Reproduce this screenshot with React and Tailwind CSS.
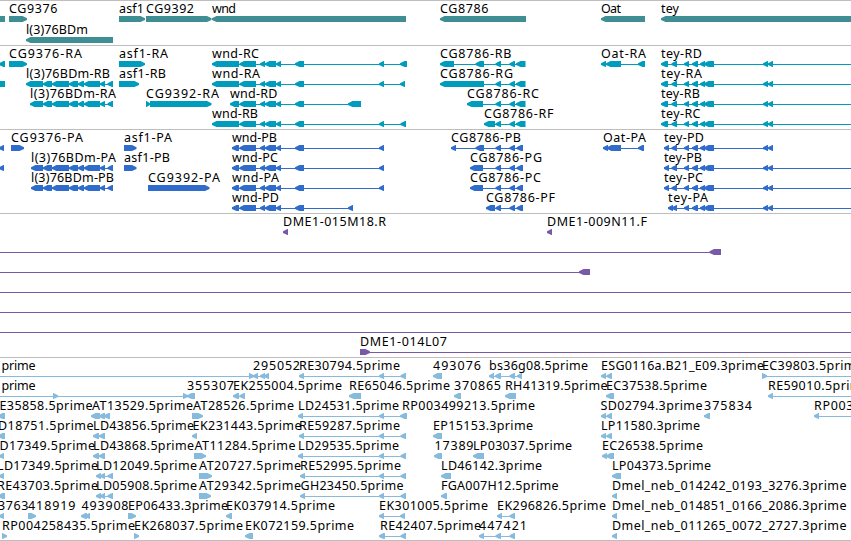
import React from 'react';

const VIEW_WIDTH = 851;
const BAR = 6;
const HEAD = 5;

// exon groups shared between isoforms: [start, end]
const L3_TAIL = [[43, 52], [52, 69], [69, 78], [78, 84], [84, 100], [100, 105], [107.5, 113]];
const WND_MID = [[239.5, 256], [260, 265], [265, 276], [276, 281], [295, 304]];
const CG8786_TAIL = [[495.5, 501], [509.5, 515]];
const TEY_MID = [[671.5, 677], [684, 689], [692, 698], [700, 705], [704, 714], [763, 768], [768, 773]];
const TEY_SHORT = TEY_MID.slice(1);
const EST_WND = [[379, 384], [400.5, 406]];

// name, x and w place the label; exons default to pointing left
const genes = [
    { row: 0, exons: [[0, 5]], dir: 'none' },
    { name: 'CG9376', x: 9, w: 48.5, row: 0, exons: [[9, 27]], dir: 'right' },
    { name: 'l(3)76BDm', x: 26, w: 62, row: 1, exons: [[26, 113]] },
    { name: 'asf1', x: 119, w: 25, row: 0, exons: [[119, 145]], dir: 'right' },
    { name: 'CG9392', x: 146, w: 48, row: 0, exons: [[146, 211.5]], dir: 'right' },
    { name: 'wnd', x: 212, w: 24, row: 0, exons: [[212, 406]] },
    { name: 'CG8786', x: 440, w: 48.5, row: 0, exons: [[440, 526]] },
    { name: 'Oat', x: 601, w: 20, row: 0, exons: [[601, 645]] },
    { name: 'tey', x: 661, w: 18, row: 0, exons: [[661, 860]] },
];

const transcripts = [
    { row: 0, exons: [[-1, 5]] },
    { name: 'CG9376-RA', x: 9, w: 73, row: 0, exons: [[9, 27]], dir: 'right' },
    { name: 'asf1-RA', x: 119, w: 49, row: 0, exons: [[119, 145]], dir: 'right' },
    { name: 'wnd-RC', x: 212, w: 47, row: 0, exons: [[212, 239], ...WND_MID, [379, 384], [400, 407]] },
    { name: 'CG8786-RB', x: 440, w: 71.5, row: 0, exons: [[440, 454], [475.5, 484], ...CG8786_TAIL, [516, 525.5]] },
    { name: 'Oat-RA', x: 601, w: 45, row: 0, exons: [[601, 606], [606, 621], [638, 645]] },
    { name: 'tey-RD', x: 661, w: 41, row: 0, exons: [[661, 668], ...TEY_MID], to: 851 },

    { row: 1, exons: [[0, 5]], dir: 'none' },
    { name: 'l(3)76BDm-RB', x: 26, w: 84, row: 1, exons: [[26, 43], ...L3_TAIL] },
    { name: 'asf1-RB', x: 119, w: 47, row: 1, exons: [[119, 139]], dir: 'right' },
    { name: 'wnd-RA', x: 212, w: 48, row: 1, exons: [[212, 239], ...WND_MID, [379, 384], [400, 405]] },
    { name: 'CG8786-RG', x: 440, w: 73, row: 1, exons: [[440, 484], ...CG8786_TAIL, [516, 525.5]] },
    { name: 'tey-RA', x: 661, w: 41, row: 1, exons: [[661, 668], ...TEY_MID], to: 851 },

    { name: 'l(3)76BDm-RA', x: 30, w: 86, row: 2, exons: [[30, 43], ...L3_TAIL] },
    { name: 'CG9392-RA', x: 146, w: 73, row: 2, exons: [[146, 150], [150, 211.5]], dir: 'right' },
    { name: 'wnd-RD', x: 230, w: 47.5, row: 2, exons: [[230, 239], ...WND_MID, [348, 361]] },
    { name: 'CG8786-RC', x: 467, w: 72, row: 2, exons: [[467, 483], ...CG8786_TAIL, [516, 525.5]] },
    { name: 'tey-RB', x: 661, w: 39, row: 2, exons: [[661, 668], ...TEY_MID], to: 851 },

    { name: 'wnd-RB', x: 212, w: 46, row: 3, exons: [[212, 239], ...WND_MID, [379, 384], [400.5, 406]] },
    { name: 'CG8786-RF', x: 484, w: 69.5, row: 3, exons: [[484, 495], ...CG8786_TAIL, [516, 525.5]] },
    { name: 'tey-RC', x: 661, w: 39.5, row: 3, exons: [[661, 668], ...TEY_MID], to: 851 },
];

const proteins = [
    { row: 0, exons: [[-1, 4]] },
    { name: 'CG9376-PA', x: 11, w: 72, row: 0, exons: [[11, 24]], dir: 'right' },
    { name: 'asf1-PA', x: 124, w: 48, row: 0, exons: [[124, 136.5]], dir: 'right' },
    { name: 'wnd-PB', x: 232, w: 45, row: 0, exons: [[232, 239], ...WND_MID, [379, 384]] },
    { name: 'CG8786-PB', x: 451, w: 70, row: 0, exons: [[451, 456], [475.5, 484], ...CG8786_TAIL, [516.5, 523]] },
    { name: 'Oat-PA', x: 603, w: 43, row: 0, exons: [[603, 608], [607, 621], [638, 644]] },
    { name: 'tey-PD', x: 664, w: 40, row: 0, exons: [[664, 669], ...TEY_MID] },

    { row: 1, exons: [[-1, 4]] },
    { name: 'l(3)76BDm-PA', x: 31, w: 85, row: 1, exons: [[31, 43], ...L3_TAIL] },
    { name: 'asf1-PB', x: 124, w: 46, row: 1, exons: [[124, 136.5]], dir: 'right' },
    { name: 'wnd-PC', x: 232, w: 46, row: 1, exons: [[232, 239], ...WND_MID, [379, 384]] },
    { name: 'CG8786-PG', x: 470, w: 72, row: 1, exons: [[470, 483], ...CG8786_TAIL, [516.5, 523]] },
    { name: 'tey-PB', x: 664, w: 38, row: 1, exons: [[664, 669], ...TEY_MID], to: 851 },

    { name: 'l(3)76BDm-PB', x: 31, w: 83, row: 2, exons: [[31, 43], ...L3_TAIL] },
    { name: 'CG9392-PA', x: 148, w: 72, row: 2, exons: [[148, 209.5]], dir: 'right' },
    { name: 'wnd-PA', x: 232, w: 47, row: 2, exons: [[232, 239], ...WND_MID, [379, 384]] },
    { name: 'CG8786-PC', x: 470, w: 71, row: 2, exons: [[470, 483], ...CG8786_TAIL, [516.5, 523]] },
    { name: 'tey-PC', x: 664, w: 39, row: 2, exons: [[664, 669], ...TEY_MID], to: 851 },

    { name: 'wnd-PD', x: 232, w: 47, row: 3, exons: [[232, 239], ...WND_MID, [348, 353]] },
    { name: 'CG8786-PF', x: 486, w: 69, row: 3, exons: [[486, 495], ...CG8786_TAIL, [516.5, 523]] },
    { name: 'tey-PA', x: 668, w: 40, row: 3, exons: [[668, 673], [672, 677], ...TEY_SHORT], to: 851 },
];

const bacs = [
    { name: 'DME1-015M18.R', x: 283, w: 103, row: 0, exons: [[283, 288]] },
    { name: 'DME1-009N11.F', x: 547, w: 100, row: 0, exons: [[547, 552]] },
    { row: 1, exons: [[709.5, 721]], from: 0 },
    { row: 2, exons: [[579, 590]], from: 0 },
    { row: 3, exons: [], from: 0, to: 851 },
    { row: 4, exons: [], from: 0, to: 851 },
    { row: 5, exons: [], from: 0, to: 851 },
    { name: 'DME1-014L07', x: 360, w: 87, row: 6, exons: [[360, 370]], dir: 'right', to: 851 },
];

const ests = [
    { name: 'prime', x: 1.5, w: 34, row: 0, exons: [[249, 254]], dir: 'right', from: 0 },
    { name: '295052', x: 253, w: 47, row: 0, exons: [[253, 258], [260, 265], [264, 269]] },
    { name: 'RE30794.5prime', x: 299, w: 101, row: 0, exons: [[299, 304], ...EST_WND] },
    { name: '493076', x: 433, w: 48, row: 0, exons: [[433, 442]] },
    { name: 'bs36g08.5prime', x: 489, w: 99, row: 0, exons: [[489, 494], [495, 501], [509.5, 515], [517, 522]] },
    { name: 'ESG0116a.B21_E09.3prime', x: 601, w: 163, row: 0, exons: [[601, 606], [606.5, 612]] },
    { name: 'EC39803.5prime', x: 762, w: 101, row: 0, exons: [[762, 767]], dir: 'right', to: 851 },

    { name: 'prime', x: 1.5, w: 34, row: 1, exons: [[53, 58], [183, 188]], dir: 'right', from: 0 },
    { name: '355307', x: 187, w: 47, row: 1, exons: [[187, 195]] },
    { name: 'EK255004.5prime', x: 233, w: 109, row: 1, exons: [[233, 239], [239.5, 245]] },
    { name: 'RE65046.5prime', x: 349, w: 101, row: 1, exons: [[349, 361]] },
    { name: '370865', x: 454, w: 47, row: 1, exons: [[454, 461]] },
    { name: 'RH41319.5prime', x: 505, w: 102.5, row: 1, exons: [[505, 516]] },
    { name: 'EC37538.5prime', x: 606, w: 101, row: 1, exons: [[606, 614]] },
    { name: 'RE59010.5prime', x: 768, w: 101, row: 1, exons: [[768, 773]], to: 851 },

    { name: 'E35858.5prime', x: -0.5, w: 93, row: 2, exons: [[-2, 5]] },
    { name: 'AT13529.5prime', x: 92, w: 101, row: 2, exons: [[91, 100], [99, 105], [104, 110]] },
    { name: 'AT28526.5prime', x: 193, w: 101, row: 2, exons: [[192, 203]], dir: 'right' },
    { name: 'LD24531.5prime', x: 298, w: 101, row: 2, exons: [[298, 303], [379, 384], [400, 407]] },
    { name: 'RP003499213.5prime', x: 402, w: 133, row: 2, exons: [] },
    { name: 'SD02794.3prime', x: 600.5, w: 102, row: 2, exons: [[601, 606], [606.5, 612]] },
    { name: '375834', x: 704, w: 48, row: 2, exons: [[704, 710]] },
    { name: 'RP003', x: 814, w: 39.5, row: 2, exons: [[814, 819]], to: 851 },

    { name: 'D18751.5prime', x: -2, w: 95.5, row: 3, exons: [[-2, 5]] },
    { name: 'LD43856.5prime', x: 93, w: 101, row: 3, exons: [[93, 99], [99, 105]] },
    { name: 'EK231443.5prime', x: 192.5, w: 109, row: 3, exons: [[192, 197]] },
    { name: 'RE59287.5prime', x: 299, w: 101, row: 3, exons: [[299, 304], ...EST_WND] },
    { name: 'EP15153.3prime', x: 433, w: 100, row: 3, exons: [[433, 442]] },
    { name: 'LP11580.3prime', x: 601, w: 99, row: 3, exons: [[601, 606], [606.5, 612]] },

    { name: 'D17349.5prime', x: -0.5, w: 95.5, row: 4, exons: [[-1, 4]] },
    { name: 'LD43868.5prime', x: 93, w: 101, row: 4, exons: [[93, 99], [99, 105]] },
    { name: 'AT11284.5prime', x: 194.5, w: 101, row: 4, exons: [[194, 206]], dir: 'right' },
    { name: 'LD29535.5prime', x: 298, w: 101, row: 4, exons: [[298, 303], ...EST_WND] },
    { name: '17389', x: 434.5, w: 39, row: 4, exons: [[434, 442]] },
    { name: 'LP03037.5prime', x: 473, w: 99, row: 4, exons: [[473, 484]] },
    { name: 'EC26538.5prime', x: 602, w: 101, row: 4, exons: [[602, 607], [606, 614]] },

    { name: 'LD17349.5prime', x: -3, w: 101, row: 5, exons: [[-1, 4]] },
    { name: 'LD12049.5prime', x: 96, w: 101, row: 5, exons: [[96, 101], [100, 105], [107.5, 113]] },
    { name: 'AT20727.5prime', x: 199, w: 102, row: 5, exons: [[199, 212]], dir: 'right' },
    { name: 'RE52995.5prime', x: 300, w: 101, row: 5, exons: [[300, 305], ...EST_WND] },
    { name: 'LD46142.3prime', x: 441, w: 101, row: 5, exons: [[441, 451]] },
    { name: 'LP04373.5prime', x: 612, w: 99, row: 5, exons: [[612, 621]] },

    { name: 'RE43703.5prime', x: -3, w: 101, row: 6, exons: [[-2, 5]] },
    { name: 'LD05908.5prime', x: 96, w: 101, row: 6, exons: [[96, 101], [100, 105], [107.5, 113]] },
    { name: 'AT29342.5prime', x: 199, w: 102, row: 6, exons: [[199, 211]], dir: 'right' },
    { name: 'GH23450.5prime', x: 300.5, w: 103, row: 6, exons: [[300, 305], ...EST_WND] },
    { name: 'FGA007H12.5prime', x: 441, w: 117.5, row: 6, exons: [[441, 447]] },
    { name: 'Dmel_neb_014242_0193_3276.3prime', x: 612, w: 234.5, row: 6, exons: [[612, 617]] },

    { name: '3763', x: -2, w: 30.5, row: 7, exons: [[-1, 4]] },
    { name: '418919', x: 28, w: 47.5, row: 7, exons: [[28, 36]], dir: 'right' },
    { name: '493908', x: 81.5, w: 47, row: 7, exons: [[81, 87], [85, 90]] },
    { name: 'EP06433.3prime', x: 128, w: 100, row: 7, exons: [[128, 136]], dir: 'right' },
    { name: 'EK037914.5prime', x: 226, w: 109, row: 7, exons: [[226, 232]] },
    { name: 'EK301005.5prime', x: 379, w: 109, row: 7, exons: [[379, 384], [400, 405]] },
    { name: 'EK296826.5prime', x: 497, w: 109, row: 7, exons: [[497, 502], [509.5, 515]] },
    { name: 'Dmel_neb_014851_0166_2086.3prime', x: 612, w: 234.5, row: 7, exons: [[612, 617]] },

    { name: 'RP004258435.5prime', x: 2, w: 133, row: 8, exons: [[2, 7]], dir: 'right' },
    { name: 'EK268037.5prime', x: 134, w: 109, row: 8, exons: [[134, 139]], dir: 'right' },
    { name: 'EK072159.5prime', x: 245, w: 109, row: 8, exons: [[245, 253]] },
    { name: 'RE42407.5prime', x: 380, w: 101, row: 8, exons: [[380, 385], ...EST_WND] },
    { name: '447421', x: 479, w: 48, row: 8, exons: [[479, 484], [495.5, 501], [509.5, 515]] },
    { name: 'Dmel_neb_011265_0072_2727.3prime', x: 612, w: 234.5, row: 8, exons: [[612, 617]] },
];

// slightly blunt tip, so that short exons keep their weight at this size
const exonPoints = ([start, end], y, dir) => {
    const head = Math.min(HEAD, end - start) - 0.5;
    const tipTop = y + 2.2;
    const tipBottom = y + 4;
    const bottom = y + BAR;
    if (dir === 'none') {
        return `${start},${y} ${end},${y} ${end},${bottom} ${start},${bottom}`;
    }
    if (dir === 'right') {
        return `${start},${y} ${end - head},${y} ${end},${tipTop} ${end},${tipBottom} ${end - head},${bottom} ${start},${bottom}`;
    }
    return `${start},${tipTop} ${start + head},${y} ${end},${y} ${end},${bottom} ${start + head},${bottom} ${start},${tipBottom}`;
};

const Feature = ({ feature, pitch }) => {
    const { name, x, w, row, exons, dir = 'left' } = feature;
    const top = row * pitch;
    const barY = top + 15;
    const from = feature.from ?? (exons.length ? exons[0][0] + 2 : null);
    const to = feature.to ?? (exons.length ? exons[exons.length - 1][1] - 1 : null);
    const hasLine = from !== null && (exons.length !== 1 || feature.from !== undefined || feature.to !== undefined);

    return (
        <g>
            {hasLine && <rect x={from} y={barY + 3} width={to - from} height="1" />}
            {exons.map((exon) => (
                <polygon key={exon[0]} points={exonPoints(exon, barY, dir)} />
            ))}
            {name && (
                <text x={x} y={top + 12} textLength={w} className="fill-black">
                    {name}
                </text>
            )}
        </g>
    );
};

const Track = ({ features, pitch = 20, className }) => (
    <section className={`w-full shrink-0 overflow-hidden border-t border-[#bebebe] ${className}`}>
        <svg
            width={VIEW_WIDTH}
            height="100%"
            className="block fill-current font-['Noto_Sans',sans-serif] text-[12.5px]"
        >
            {features.map((feature, i) => (
                <Feature key={i} feature={feature} pitch={pitch} />
            ))}
        </svg>
    </section>
);

const App = () => {
    return (
        <main className="flex h-[541px] w-[851px] flex-col overflow-hidden border-b border-[#bebebe] bg-white">
            <Track features={genes} pitch={21} className="h-[45px] text-[#3e8e93]" />
            <Track features={transcripts} className="h-[84px] text-[#009cbd]" />
            <Track features={proteins} className="h-[84px] text-[#2f6ccb]" />
            <Track features={bacs} className="h-36 text-[#7759a8]" />
            <Track features={ests} className="h-[183px] text-[#87bbdd]" />
        </main>
    );
};

export default App;
